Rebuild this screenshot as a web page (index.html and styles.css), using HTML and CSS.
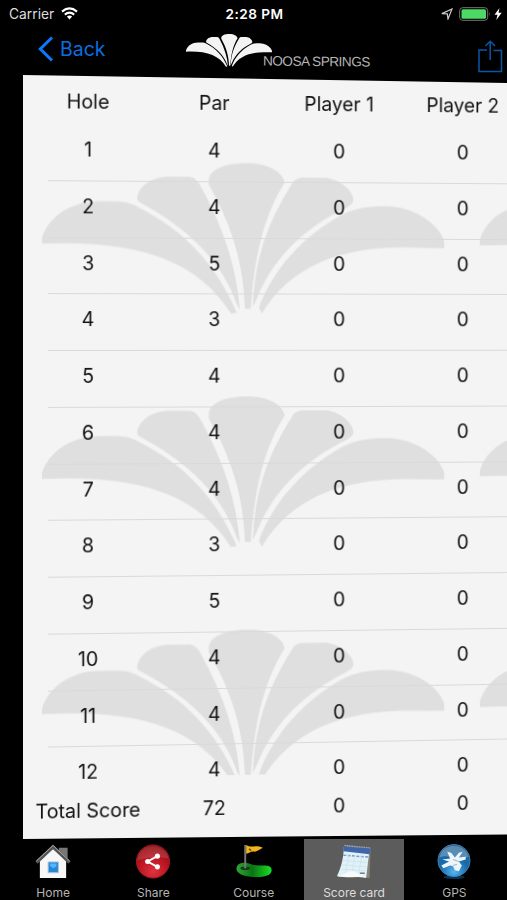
FILE: index.html
```
<!DOCTYPE html>
<html lang="en">
<head>
    <meta charset="UTF-8">
    <meta name="viewport" content="width=device-width, initial-scale=1.0">
    <title>Noosa Springs - Score card</title>
    <link rel="stylesheet" href="styles.css">
</head>
<body>
    <!-- shared flower shape -->
    <svg class="defs" width="0" height="0">
        <symbol id="flower" viewBox="0 0 402 151" preserveAspectRatio="none">
            <path d="M0 81V75C7 54 29 39 56 39H72C82 39 90 41 96 45C140 67 172 100 193 149L187 150C154 96 92 77 0 81Z"/>
            <path d="M94 34C96 24 108 14 125 14H146C152 15 155 19 158 25C180 65 193 105 196 146L193 141C179 100 147 67 97 40Q93 38 94 34Z"/>
            <path d="M165 18C165 7 180 0 203 0C225 0 238 8 241 19C218 55 210 100 207 145H201C200 100 187 60 165 22Z"/>
            <path d="M249 19C250 16 254 14 262 14H281C297 15 309 27 310 35C310 39 308 41 304 43C265 62 231 90 213 135L209 143C211 95 223 60 249 19Z"/>
            <path d="M300 50C312 44 325 42 343 42C374 42 398 62 402 77V84H388C310 79 250 96 218 150L215 144C229 106 259 72 300 50Z"/>
        </symbol>
    </svg>

    <div class="phone">
        <div class="status">
            <div class="status-left">
                <span>Carrier</span>
                <svg width="17" height="13" viewBox="0 0 17 13" fill="none" stroke="#fff" stroke-width="2.1">
                    <path d="M1 4.6Q8.5-1.8 16 4.6"/>
                    <path d="M3.8 7.6Q8.5 3.6 13.2 7.6"/>
                    <path d="M5.9 9.6Q8.5 7.4 11.1 9.6L8.5 12.4Z" fill="#fff" stroke="none"/>
                </svg>
            </div>
            <div class="time">2:28 PM</div>
            <div class="status-right">
                <svg width="12" height="12" viewBox="0 0 12 12" fill="none" stroke="#ccc" stroke-width="1.2">
                    <path d="M.8 5.6L11 1L7 11L6.300 5.800Z"/>
                </svg>
                <svg width="32" height="14" viewBox="0 0 32 14">
                    <rect x=".7" y=".7" width="28" height="12.6" rx="3" fill="none" stroke="#777"/>
                    <rect x="2.5" y="2.2" width="24.5" height="9.6" rx="1.5" fill="#4cd964"/>
                    <path d="M30 5q1.5 2 0 4Z" fill="#777"/>
                </svg>
                <svg width="8" height="12" viewBox="0 0 8 12"><path d="M5.5 0L.5 6.8H3.5L2.3 12L7.7 4.8H4.5Z" fill="#fff"/></svg>
            </div>
        </div>

        <div class="nav">
            <a class="back">
                <svg width="16" height="26" viewBox="0 0 16 26" fill="none" stroke="#0a7aff" stroke-width="3"><path d="M14 1.5L2.3 13L14 24.5"/></svg>
                <span>Back</span>
            </a>
            <div class="logo">
                <svg class="logo-flower" width="86" height="33" fill="#f4f4f4"><use href="#flower"/></svg>
                <span>NOOSA SPRINGS</span>
            </div>
            <svg class="share" width="25" height="33" viewBox="0 0 25 33" fill="none" stroke="#0757a8" stroke-width="1.5">
                <path d="M9 10H1V31.5H23.5V10.5H15.5"/>
                <path d="M12.2 20V1.2M7.3 6L12.2 1.2L17 6"/>
            </svg>
        </div>

        <div class="panel">
            <div class="card">
                <div class="row head"><span>Hole</span><span>Par</span><span>Player 1</span><span>Player 2</span></div>
                <div class="list">
                    <svg class="watermark" width="520" height="655">
                        <pattern id="tile" x="19" y="37.500" width="447" height="235.5" patternUnits="userSpaceOnUse">
                            <use href="#flower" width="410" height="153" fill="#dfdfdf"/>
                        </pattern>
                        <rect x="0" y="37" width="520" height="618" fill="url(#tile)"/>
                    </svg>
                    <div class="row"><span>1</span><span>4</span><span>0</span><span>0</span></div>
                    <div class="row"><span>2</span><span>4</span><span>0</span><span>0</span></div>
                    <div class="row"><span>3</span><span>5</span><span>0</span><span>0</span></div>
                    <div class="row"><span>4</span><span>3</span><span>0</span><span>0</span></div>
                    <div class="row"><span>5</span><span>4</span><span>0</span><span>0</span></div>
                    <div class="row"><span>6</span><span>4</span><span>0</span><span>0</span></div>
                    <div class="row"><span>7</span><span>4</span><span>0</span><span>0</span></div>
                    <div class="row"><span>8</span><span>3</span><span>0</span><span>0</span></div>
                    <div class="row"><span>9</span><span>5</span><span>0</span><span>0</span></div>
                    <div class="row"><span>10</span><span>4</span><span>0</span><span>0</span></div>
                    <div class="row"><span>11</span><span>4</span><span>0</span><span>0</span></div>
                    <div class="row"><span>12</span><span>4</span><span>0</span><span>0</span></div>
                </div>
                <div class="row total"><span>Total Score</span><span>72</span><span>0</span><span>0</span></div>
            </div>
        </div>

        <div class="tabs">
            <div class="tab">
                <svg width="38" height="38" viewBox="0 0 38 38">
                    <path d="M25 5H34V19L25 12Z" fill="#777"/>
                    <path d="M5.500 18L19 6L32.500 18V36H5.500Z" fill="#f7f7f7"/>
                    <path d="M2 20L19 4L36 20" fill="none" stroke="#555" stroke-width="3.4"/>
                    <path d="M2 18.500L19 2.500L36 18.500" fill="none" stroke="#aaa" stroke-width="1"/>
                    <rect x="14" y="19.500" width="10.500" height="11" fill="#2787d2" stroke="#a9c4da"/>
                    <path d="M16 21H22.500V24L19.500 26L16 24Z" fill="#55b5ff"/>
                </svg>
                <span>Home</span>
            </div>
            <div class="tab">
                <svg width="38" height="38" viewBox="0 0 38 38">
                    <defs><radialGradient id="red" cx=".5" cy=".8" r=".75"><stop offset="0" stop-color="#df3140"/><stop offset=".6" stop-color="#b9141f"/><stop offset="1" stop-color="#8c0b13"/></radialGradient></defs>
                    <circle cx="19" cy="19" r="17" fill="url(#red)" stroke="#a51922"/>
                    <path d="M3 18C4 7 12 3 19 3S34 8 35 16C25 14 14 14 3 18Z" fill="#fff" opacity=".13"/>
                    <path d="M23.500 13.500L13.500 19L23.500 24.500" fill="none" stroke="#fff" stroke-width="2"/>
                    <g fill="#fff"><circle cx="23.500" cy="13.500" r="2.600"/><circle cx="13.500" cy="19" r="2.600"/><circle cx="23.500" cy="24.500" r="2.600"/></g>
                </svg>
                <span>Share</span>
            </div>
            <div class="tab">
                <svg width="38" height="38" viewBox="0 0 38 38">
                    <defs><linearGradient id="green"><stop offset="0" stop-color="#31a33a"/><stop offset=".45" stop-color="#087413"/><stop offset="1" stop-color="#19df24"/></linearGradient></defs>
                    <path d="M1 27C1 20 9 19 17 22C24 25 36 20 37 27C38 33 30 35 22 35C12 35 2 33 1 27Z" fill="url(#green)"/>
                    <ellipse cx="10" cy="26" rx="5" ry="1.800" fill="#123d16"/>
                    <path d="M10 2V26" stroke="#777" stroke-width="2"/>
                    <path d="M11 2C17 6 20 1 28 5C25 7 23 8 20 9C16 8 14 11 11 11Z" fill="#f2b51c"/>
                    <path d="M14 6L16 8" stroke="#594611" stroke-width="1.500"/>
                </svg>
                <span>Course</span>
            </div>
            <div class="tab active">
                <svg width="38" height="38" viewBox="0 0 38 38">
                    <path d="M10 2L36 5L35 36L20 35Z" fill="#85837b"/>
                    <path d="M8.500 4L35 6L31.500 36C22 31 12 37 1.500 34C6 25 8.500 14 8.500 4Z" fill="#e1f1f8"/>
                    <path d="M8.500 3.500L36 5.500L35 11.500L8 8.500Z" fill="#3f66a9"/>
                    <path d="M9 2.500L36 5" stroke="#9ba2ab" stroke-width="1.300" stroke-dasharray="1.500 1"/>
                    <path d="M8 12.500L34 14.500" stroke="#7899d3" stroke-width="1.500" stroke-dasharray="3 1.500"/>
                    <path d="M8 18L33 20M7 22.500L32 24.500M6 27L31 28.500M14 11L10 31M20 12L17 31M27 13L24 31" stroke="#c8e0ec" stroke-width=".7"/>
                    <path d="M1.500 34C9 34 14 27 18 29C23 32 28 31 31.500 36C22 33 12 37 1.500 34Z" fill="#f8fafa"/>
                    <path d="M25 31H30" stroke="#546b7c" stroke-width="1.300"/>
                </svg>
                <span>Score card</span>
            </div>
            <div class="tab">
                <svg width="38" height="38" viewBox="0 0 38 38">
                    <defs><radialGradient id="blue" cx=".5" cy=".85" r=".85"><stop offset="0" stop-color="#54b5ed"/><stop offset=".5" stop-color="#176bad"/><stop offset="1" stop-color="#2c6390"/></radialGradient></defs>
                    <ellipse cx="19" cy="35" rx="11" ry="2" fill="#0a3151"/>
                    <circle cx="19" cy="18" r="16.500" fill="url(#blue)" stroke="#3d81b5"/>
                    <path d="M4 15C6 5 13 3 19 3S32 6 34 14C25 18 12 11 4 15Z" fill="#fff" opacity=".25"/>
                    <path d="M12 9L16 10L20 15L24 10L28 9L24 15L31 14V17L24 19L27 23L24 29L20 28L18 24L15 23L8 26L6 23L14 19L7 17L15 16Z" fill="#eef4f7"/>
                    <path d="M18 17L24 19M18 23L22 22" stroke="#9fb4c2" fill="none"/>
                </svg>
                <span>GPS</span>
            </div>
        </div>
    </div>
</body>
</html>
```
FILE: styles.css
```
body {
    margin: 0;
    background-color: #000;
    font-family: Inter, "Liberation Sans", sans-serif;
    overflow: hidden;
}
.defs {
    display: block;
}
.phone {
    display: flex;
    flex-direction: column;
    width: 507px;
    height: 900px;
    overflow: hidden;
}
/* status bar */
.status {
    display: grid;
    grid-template-columns: 1fr auto 1fr;
    align-items: center;
    height: 27px;
    padding: 0 5px 0 9px;
    color: #fff;
    font-size: 13.6px;
    box-sizing: border-box;
}
.status-left,
.status-right {
    display: flex;
    align-items: center;
    gap: 7px;
}
.status-left {
    color: #ddd;
    font-size: 13.8px;
}
.status-right {
    justify-content: flex-end;
    gap: 6px;
}
.status-right svg:last-child {
    margin-left: -3px;
}
.time {
    font-weight: 600;
    letter-spacing: .45px;
    padding-right: 2px;
}
/* navigation bar */
.nav {
    display: flex;
    height: 48px;
    padding-left: 38px;
}
.back {
    display: flex;
    align-items: center;
    gap: 6px;
    width: 148px;
    height: 44px;
    color: #0a6fe0;
    font-size: 19.5px;
}
.logo {
    display: flex;
    width: 292px;
    color: #b4b4b4;
    font-family: "Liberation Sans", sans-serif;
    font-size: 13.6px;
    letter-spacing: -.5px;
    white-space: nowrap;
}
.logo-flower {
    margin-top: 7px;
}
.logo span {
    margin: 27px 0 0 -9px;
    height: 16px;
    transform: rotate(.6deg);
}
.share {
    margin-top: 13px;
}
/* the card swings in, so its right side is a bit further away */
.panel {
    height: 764px;
    margin-left: 23px;
    background-color: #f4f4f4;
    overflow: hidden;
    clip-path: polygon(0 0, 100% 8px, 100% 759.5px, 0 100%);
}
.card {
    width: 520px;
    color: #111;
    font-size: 19.8px;
    transform-origin: 0 264px;
    transform: matrix3d(1, 0, 0, 0.000043, 0, 1, 0, 0, 0, 0, 1, 0, 0, 0, 0, 1);
}
.row {
    display: grid;
    grid-template-columns: repeat(4, 127.7px);
    height: 56.76px;
    padding-left: 1.4px;
    line-height: 50.5px;
    text-align: center;
    white-space: nowrap;
    box-sizing: border-box;
    background: linear-gradient(#d9d9d9, #d9d9d9) 25px 100% / 100% 1px no-repeat;
    position: relative;
}
.head {
    height: 49px;
    line-height: 53px;
    background: none;
}
.list {
    height: 656px;
    overflow: hidden;
    position: relative;
}
.watermark {
    position: absolute;
    top: 0;
    left: 0;
}
.total {
    height: 64px;
    line-height: 64px;
    background: none;
}
/* tab bar */
.tabs {
    display: flex;
    height: 61px;
    padding-left: 3px;
}
.tab {
    display: flex;
    flex-direction: column;
    align-items: center;
    width: 100.3px;
    padding-top: 4px;
    box-sizing: border-box;
    color: #b4b4b4;
    font-size: 12px;
}
.tab span {
    margin-top: 5px;
    line-height: 15px;
}
.active {
    background-color: #5c5c5c;
    color: #ddd;
}
```
